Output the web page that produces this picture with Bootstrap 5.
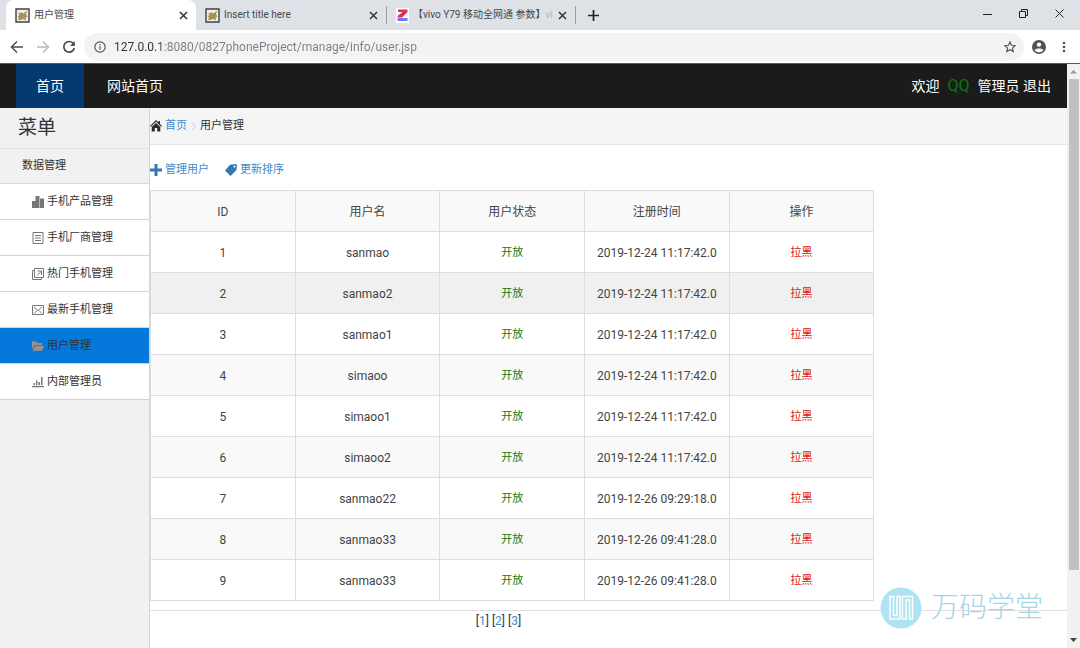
<!DOCTYPE html>
<html lang="zh-CN">
<head>
<meta charset="utf-8">
<meta name="viewport" content="width=device-width, initial-scale=1">
<title>用户管理</title>
<link rel="stylesheet" href="https://cdn.jsdelivr.net/npm/bootstrap@5.3.0/dist/css/bootstrap.min.css">
<style>
  body { font-family: Roboto, "Noto Sans CJK SC", sans-serif; font-size: 12px; line-height: 16px; color: #333; background: #fff; }
  a { color: #428bca; text-decoration: none; }
  button { border: 0; background: none; padding: 0; color: inherit; }
  svg { display: block; flex: none; }

  .tab-strip { height: 30px; background: #dee1e6; padding-left: 6px; color: #45484c; font-size: 10px; }
  .browser-tab { width: 190px; padding: 0 8px 0 9px; }
  .browser-tab.current { background: #fff; border-radius: 8px 8px 0 0; }
  .browser-tab.divided { border-left: 1px solid #9a9da1; border-right: 1px solid #9a9da1; height: 18px; }
  .tab-name { text-align: left; white-space: nowrap; }
  .faded { color: #b4b7bb; }
  .toolbar { height: 34px; padding: 0 10px; color: #55585c; border-bottom: 1px solid #5a5a5a; }
  .address { background: #f1f3f4; border-radius: 14px; height: 28px; padding: 0 8px 0 10px; }
  .address input { border: 0; outline: 0; padding: 0; font-size: 12px; color: transparent; background: linear-gradient(90deg, #2e3134 47px, #7b7e82 47px); -webkit-background-clip: text; background-clip: text; }

  .site-nav { background: #1b1b1b; height: 44px; padding: 0 16px; font-size: 14px; }
  .site-nav a { color: #fff; }
  .site-nav .nav-link { padding: 0 20px; height: 44px; margin-right: 3px; }
  .site-nav .nav-link.active { background: #053a71; }
  .qq { color: #0b7a0b; font-size: 16px; }

  .side-menu { width: 150px; flex: none; background: #f1f1f1; border-right: 1px solid #d5d5d5; }
  .side-menu h1 { font-size: 19px; line-height: 24px; height: 41px; padding: 8px 18px; font-weight: 400; margin: 0; border-bottom: 1px solid #e2e2e2; }
  .side-menu h2 { font-size: 11px; height: 35px; padding: 0 22px; font-weight: 400; margin: 0; border-bottom: 1px solid #d9d9d9; }
  .side-menu a { height: 36px; padding: 0 32px; gap: 3px; background: #fff; color: #333; font-size: 11px; border-bottom: 1px solid #d4d4d4; white-space: nowrap; }
  .side-menu a.active { background: #0578dc; }
  .side-menu svg { color: #777; }
  .side-menu a.active svg { color: #a08f86; }

  .crumbs { height: 37px; background: #f5f5f5; border-bottom: 1px solid #e4e4e4; }
  .crumbs, .actions { font-size: 11px; gap: 3px; }
  .actions { height: 45px; gap: 16px; padding-top: 5px; }
  .users { width: 79%; margin: 0 0 9px; table-layout: fixed; text-align: center; border-color: #ddd; --bs-table-color: #444; --bs-table-bg: transparent; }
  .users th, .users td { height: 41px; padding: 1px 0 0; font-weight: 400; vertical-align: middle; color: #444; }
  .users thead, .users tbody tr:nth-child(even) { background: #f9f9f9; }
  .users tbody tr.pointed { background: #f0f0f0; }
  .users td.open { color: #147a14; }
  .users td a { color: #dc1414; }
  .users .open, .users td a { font-size: 11px; }
  .pages { border-top: 1px solid #e0e0e0; }
  .pages nav { width: 76%; padding-top: 2px; }

  .scroll-rail { width: 13px; flex: none; background: #f1f1f1; }
  .scroll-thumb { width: 10px; height: 84%; background: #c1c1c1; }
  .brand-mark { position: absolute; right: 24px; bottom: 19px; color: #a3d6e6; gap: 9px; font-size: 28px; line-height: 42px; font-weight: 300; }
</style>
</head>
<body class="vh-100 overflow-hidden d-flex flex-column">

<header>
  <div class="tab-strip d-flex align-items-center">
    <div class="browser-tab current h-100 d-flex align-items-center">
      <button class="tab-name flex-grow-1 d-flex align-items-center gap-1"><svg width="15" height="15" viewBox="0 0 15 15"><path d="M1 1h13v13H1z" fill="#f4efe4" stroke="#3c4149" stroke-width="1.4"/><path d="M2.500 4.500l2.500 1 1-1.500 2 1.500L12.500 2.500 11 6l1.500 3-2 .5.500 3-3-1.500-2.500 1L3 12l1-2.500-1.500-1L4.500 7z" fill="#a49256"/></svg>用户管理</button>
      <button aria-label="关闭"><svg width="9" height="9" viewBox="0 0 9 9" stroke="#333" stroke-width="1.5"><path d="M1 1l7 7M8 1l-7 7"/></svg></button>
    </div>
    <div class="browser-tab d-flex align-items-center">
      <button class="tab-name flex-grow-1 d-flex align-items-center gap-1"><svg width="15" height="15" viewBox="0 0 15 15"><path d="M1 1h13v13H1z" fill="#f4efe4" stroke="#3c4149" stroke-width="1.4"/><path d="M2.500 4.500l2.500 1 1-1.500 2 1.500L12.500 2.500 11 6l1.500 3-2 .5.500 3-3-1.500-2.500 1L3 12l1-2.500-1.500-1L4.500 7z" fill="#a49256"/></svg>Insert title here</button>
      <button aria-label="关闭"><svg width="9" height="9" viewBox="0 0 9 9" stroke="#333" stroke-width="1.5"><path d="M1 1l7 7M8 1l-7 7"/></svg></button>
    </div>
    <div class="browser-tab divided d-flex align-items-center">
      <button class="tab-name flex-grow-1 d-flex align-items-center gap-1"><svg width="13" height="15" viewBox="0 0 13 15"><path d="M0 0h13v15H0z" fill="#fff"/><path d="M2 1.500h9.500v2.500L6 9.500H1.500V8L6.500 4H2z" fill="#e62e50"/><path d="M1.500 10h10v3h-10z" fill="#6d7bea"/></svg><span>【vivo Y79 移动全网通 参数】<span class="faded">vi</span></span></button>
      <button aria-label="关闭"><svg width="9" height="9" viewBox="0 0 9 9" stroke="#333" stroke-width="1.5"><path d="M1 1l7 7M8 1l-7 7"/></svg></button>
    </div>
    <button class="ms-2 ps-1" aria-label="新标签页"><svg width="11" height="11" viewBox="0 0 11 11" stroke="#222" stroke-width="1.700"><path d="M5.500 0v11M0 5.500h11"/></svg></button>
    <div class="ms-auto d-flex align-items-center me-3 pb-1" style="gap:27px">
      <button aria-label="最小化"><svg width="9" height="9" viewBox="0 0 9 9" stroke="#222"><path d="M0 5.500h9"/></svg></button>
      <button aria-label="还原"><svg width="9" height="9" viewBox="0 0 9 9" stroke="#222" fill="none"><path d="M.5 2.500h6v6h-6zM2.500 2.500v-2h6v6h-2"/></svg></button>
      <button aria-label="关闭窗口"><svg width="9" height="9" viewBox="0 0 9 9" stroke="#222"><path d="M.5.5l8 8M8.500.5l-8 8"/></svg></button>
    </div>
  </div>
  <div class="toolbar d-flex align-items-center">
    <button class="me-2" aria-label="后退"><svg width="14" height="14" viewBox="0 0 14 14" fill="none" stroke="#4a4d51" stroke-width="1.500"><path d="M13 7H2M7 1.500L1.500 7 7 12.500"/></svg></button>
    <button class="ms-1 me-2" aria-label="前进"><svg width="14" height="14" viewBox="0 0 14 14" fill="none" stroke="#b9bbbe" stroke-width="1.500"><path d="M1 7h11M7 1.500L12.500 7 7 12.500"/></svg></button>
    <button class="ms-1 me-2" aria-label="刷新"><svg width="14" height="14" viewBox="0 0 14 14" fill="none" stroke="#4a4d51" stroke-width="1.700"><path d="M11.500 3.800A5.300 5.300 0 1 0 12.300 8"/><path d="M12.800 1v5H8z" fill="#4a4d51" stroke="none"/></svg></button>
    <div class="address d-flex align-items-center flex-grow-1">
      <svg width="12" height="12" viewBox="0 0 12 12" fill="none" stroke="#55585c" stroke-width="1.200"><circle cx="6" cy="6" r="5.200"/><path d="M6 5.200v3.600M6 3v1.300"/></svg>
      <input class="flex-grow-1 ms-2" type="text" aria-label="地址" value="127.0.0.1:8080/0827phoneProject/manage/info/user.jsp">
      <button aria-label="收藏"><svg width="12" height="12" viewBox="0 0 12 12" fill="none" stroke="#55585c" stroke-width="1.200"><path d="M6 1l1.500 3.300 3.600.4-2.700 2.400.8 3.500L6 8.800l-3.200 1.800.8-3.500L.9 4.700l3.600-.4z"/></svg></button>
    </div>
    <button class="ms-2 me-3" aria-label="用户"><svg width="14" height="14" viewBox="0 0 14 14"><circle cx="7" cy="7" r="7" fill="#505357"/><circle cx="7" cy="4.600" r="2.200" fill="#fff"/><path d="M2.600 10.300C3.500 7.800 10.500 7.800 11.400 10.300 9 13 5 13 2.600 10.300z" fill="#fff"/></svg></button>
    <button class="me-1" aria-label="菜单"><svg width="4" height="14" viewBox="0 0 4 14" fill="#505357"><circle cx="2" cy="3" r="1.300"/><circle cx="2" cy="7" r="1.300"/><circle cx="2" cy="11" r="1.300"/></svg></button>
  </div>
</header>

<div class="d-flex flex-grow-1 overflow-hidden">
  <div class="flex-grow-1 d-flex flex-column position-relative">
    <nav class="site-nav d-flex align-items-center">
      <a class="nav-link active d-flex align-items-center" href="#">首页</a>
      <a class="nav-link d-flex align-items-center" href="#">网站首页</a>
      <div class="ms-auto text-white d-flex align-items-center gap-2"><span>欢迎</span><span class="qq">QQ</span><span>管理员 <a href="#">退出</a></span></div>
    </nav>
    <div class="d-flex flex-grow-1">
      <aside class="side-menu">
        <h1>菜单</h1>
        <h2 class="d-flex align-items-center">数据管理</h2>
        <nav>
          <a class="d-flex align-items-center" href="#"><svg width="12" height="12" viewBox="0 0 12 12" fill="currentColor"><path d="M0 5h4v7H0zM3.500 0h4v12h-4zM8 2.500h4V12H8z"/></svg>手机产品管理</a>
          <a class="d-flex align-items-center" href="#"><svg width="12" height="12" viewBox="0 0 12 12" fill="none" stroke="currentColor"><path d="M1 .5h10v11H1zM3 3.500h6M3 6h6M3 8.500h6"/></svg>手机厂商管理</a>
          <a class="d-flex align-items-center" href="#"><svg width="12" height="12" viewBox="0 0 12 12" fill="none" stroke="currentColor"><path d="M2.500 .5h9V9.500h-9zM2.500 2.500h-2v9h9v-2M5 7.500l4-4M5.500 3h4v4"/></svg>热门手机管理</a>
          <a class="d-flex align-items-center" href="#"><svg width="12" height="12" viewBox="0 0 12 12" fill="none" stroke="currentColor"><path d="M.5 1.500h11v9H.5zM2 3l4 3.500L10 3M2 9.500l3-3M10 9.500l-3-3"/></svg>最新手机管理</a>
          <a class="active d-flex align-items-center" href="#"><svg width="12" height="12" viewBox="0 0 12 12" fill="currentColor"><path d="M0 1.500h4l1 1.500h5v2H2.500L0 9zM3 5.800h9l-2 5H.5z"/></svg>用户管理</a>
          <a class="d-flex align-items-center" href="#"><svg width="12" height="12" viewBox="0 0 12 12" fill="currentColor"><path d="M0 10h12v1.300H0zM1.500 7H3v2.300H1.500zM4 4.500h1.500v4.800H4zM6.500 6H8v3.300H6.500zM9 1h1.500v8.300H9z"/></svg>内部管理员</a>
        </nav>
      </aside>
      <main class="flex-grow-1">
        <div class="crumbs d-flex align-items-center">
          <svg width="12" height="12" viewBox="0 0 12 12" fill="#2b2b2b"><path d="M6 0l2.500 2.500V1H10v3l2 2-.8.8L6 1.800.8 6.800 0 6z"/><path d="M6 3l4.300 4v4.500H7.200V8H4.800v3.500H1.700V7z"/></svg>
          <a href="#">首页</a>
          <svg width="7" height="9" viewBox="0 0 7 9" fill="none" stroke="#b9cddc"><path d="M2 .5l3.500 4L2 8.500"/></svg>
          <span>用户管理</span>
        </div>
        <div class="actions d-flex align-items-center">
          <a class="d-flex align-items-center" style="gap:3px" href="#"><svg width="12" height="12" viewBox="0 0 12 12" fill="#3379b7"><path d="M4.500 0h3v4.500H12v3H7.500V12h-3V7.500H0v-3h4.500z"/></svg>管理用户</a>
          <a class="d-flex align-items-center" style="gap:3px" href="#"><svg width="12" height="12" viewBox="0 0 12 12" fill="#3379b7"><path fill-rule="evenodd" d="M5 .8L11 0l1 1-.5 5L5.500 12 0 6.500zM9.500 1.500a1 1 0 1 0 .1 0z"/></svg>更新排序</a>
        </div>
        <table class="table table-bordered users">
          <thead><tr><th scope="col">ID</th><th scope="col">用户名</th><th scope="col">用户状态</th><th scope="col">注册时间</th><th scope="col">操作</th></tr></thead>
          <tbody>
            <tr><td>1</td><td>sanmao</td><td class="open">开放</td><td>2019-12-24 11:17:42.0</td><td><a href="#">拉黑</a></td></tr>
            <tr class="pointed"><td>2</td><td>sanmao2</td><td class="open">开放</td><td>2019-12-24 11:17:42.0</td><td><a href="#">拉黑</a></td></tr>
            <tr><td>3</td><td>sanmao1</td><td class="open">开放</td><td>2019-12-24 11:17:42.0</td><td><a href="#">拉黑</a></td></tr>
            <tr><td>4</td><td>simaoo</td><td class="open">开放</td><td>2019-12-24 11:17:42.0</td><td><a href="#">拉黑</a></td></tr>
            <tr><td>5</td><td>simaoo1</td><td class="open">开放</td><td>2019-12-24 11:17:42.0</td><td><a href="#">拉黑</a></td></tr>
            <tr><td>6</td><td>simaoo2</td><td class="open">开放</td><td>2019-12-24 11:17:42.0</td><td><a href="#">拉黑</a></td></tr>
            <tr><td>7</td><td>sanmao22</td><td class="open">开放</td><td>2019-12-26 09:29:18.0</td><td><a href="#">拉黑</a></td></tr>
            <tr><td>8</td><td>sanmao33</td><td class="open">开放</td><td>2019-12-26 09:41:28.0</td><td><a href="#">拉黑</a></td></tr>
            <tr><td>9</td><td>sanmao33</td><td class="open">开放</td><td>2019-12-26 09:41:28.0</td><td><a href="#">拉黑</a></td></tr>
          </tbody>
        </table>
        <div class="pages"><nav class="text-center" aria-label="分页">[<a href="#">1</a>] [<a href="#">2</a>] [<a href="#">3</a>]</nav></div>
      </main>
    </div>
    <div class="brand-mark d-flex align-items-center">
      <svg width="42" height="42" viewBox="0 0 42 42"><circle cx="21" cy="21" r="20.500" fill="#aee3f1"/><path d="M10 9.500V32h10V9.500h-3V28.500h-3.500V9.500zM22.500 32V9.500h10V32h-3V13h-3.500V32z" fill="none" stroke="#fff" stroke-width="1.500"/></svg>
      <span>万码学堂</span>
    </div>
  </div>
  <div class="scroll-rail d-flex flex-column align-items-center" aria-hidden="true">
    <svg class="my-1" width="7" height="7" viewBox="0 0 7 7"><path d="M0 5.500h7L3.500 2z" fill="#999"/></svg>
    <div class="scroll-thumb"></div>
    <svg class="mt-auto mb-1" width="7" height="7" viewBox="0 0 7 7"><path d="M0 1h7L3.500 5z" fill="#444"/></svg>
  </div>
</div>
<script src="https://cdn.jsdelivr.net/npm/bootstrap@5.3.0/dist/js/bootstrap.bundle.min.js"></script>
</body>
</html>
